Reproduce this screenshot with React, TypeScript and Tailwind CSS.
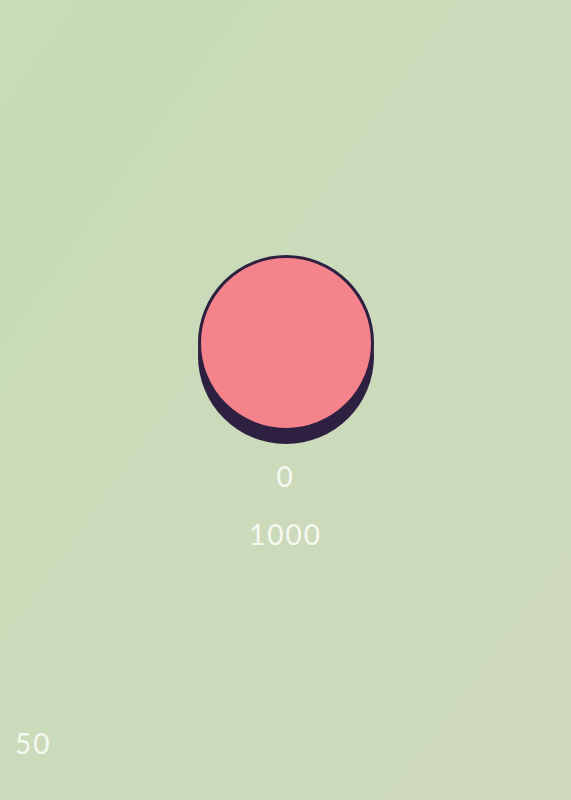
export default function App() {
    return (
        <div className="flex h-[800px] w-full flex-col bg-linear-to-br from-[#c7dcb8] to-[#cfd9bd] font-['Lato',sans-serif] text-[#f6f9f1]">
            <div className="flex flex-col items-center pt-[255px]">
                <button
                    type="button"
                    className="h-[176px] w-[176px] rounded-full border-[3px] border-[#2e2040] bg-[#f4838b] shadow-[0_13px_0_#2e2040]"
                />
                <p className="mt-[31px] text-[28px] leading-[28px] tracking-[2px]">0</p>
                <p className="mt-[30px] text-[28px] leading-[28px] tracking-[2px]">1000</p>
            </div>
            <p className="mt-auto pb-[43px] pl-[15px] text-[28px] leading-[28px] tracking-[2px]">50</p>
        </div>
    );
}
